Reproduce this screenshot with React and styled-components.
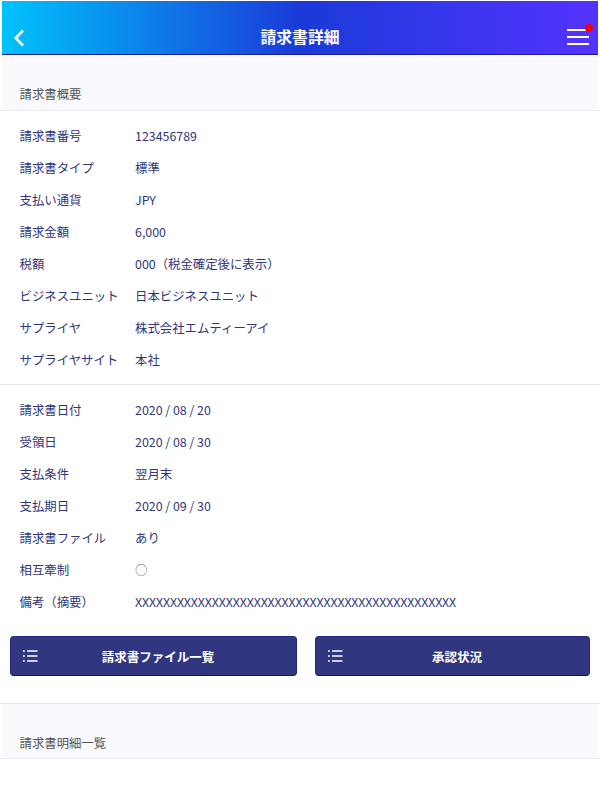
import React from "react";
import styled, { createGlobalStyle } from "styled-components";

const GlobalStyle = createGlobalStyle`
  html, body {
    margin: 0;
    padding: 0;
    background: #fff;
    font-family: "Noto Sans CJK JP", "Noto Sans", sans-serif;
  }
`;

const summaryRows = [
  ["請求書番号", "123456789"],
  ["請求書タイプ", "標準"],
  ["支払い通貨", "JPY"],
  ["請求金額", "6,000"],
  ["税額", "000（税金確定後に表示）"],
  ["ビジネスユニット", "日本ビジネスユニット"],
  ["サプライヤ", "株式会社エムティーアイ"],
  ["サプライヤサイト", "本社"],
];

const dateRows = [
  ["請求書日付", "2020 / 08 / 20"],
  ["受領日", "2020 / 08 / 30"],
  ["支払条件", "翌月末"],
  ["支払期日", "2020 / 09 / 30"],
  ["請求書ファイル", "あり"],
  ["相互牽制", "○"],
  ["備考（摘要）", "X".repeat(46)],
];

const ListIcon = () => (
  <svg width="15" height="12" viewBox="0 0 15 12" fill="none" stroke="#fff" strokeWidth="1.4">
    <path d="M0 1h1.8M0 6h1.8M0 11h1.8" />
    <path d="M4 1h10.5M4 6h10.5M4 11h10.5" />
  </svg>
);

const BackIcon = () => (
  <svg width="12" height="18" viewBox="0 0 12 18" fill="none" stroke="#fff" strokeWidth="2.6">
    <path d="M10 1.5 2.6 9l7.4 7.5" />
  </svg>
);

const App = () => (
  <Page>
    <GlobalStyle />
    <Header>
      <BackButton><BackIcon /></BackButton>
      <Title>請求書詳細</Title>
      <Menu>
        <MenuLine />
        <MenuLine />
        <MenuLine />
        <Dot />
      </Menu>
    </Header>
    <SectionHead>請求書概要</SectionHead>
    <RowGroup>
      {summaryRows.map(([label, value]) => (
        <Row key={label}>
          <Label>{label}</Label>
          <Value>{value}</Value>
        </Row>
      ))}
    </RowGroup>
    <RowGroup $top>
      {dateRows.map(([label, value]) => (
        <Row key={label}>
          <Label>{label}</Label>
          <Value $muted={value === "○"} $tight={value.length > 40}>{value}</Value>
        </Row>
      ))}
    </RowGroup>
    <Buttons>
      <ActionButton $width={287}>
        <ListIcon />
        <span>請求書ファイル一覧</span>
      </ActionButton>
      <ActionButton $width={275}>
        <ListIcon />
        <span>承認状況</span>
      </ActionButton>
    </Buttons>
    <SectionHead $spaced>請求書明細一覧</SectionHead>
  </Page>
);

export default App;

const Page = styled.div`
  width: 600px;
  height: 800px;
  overflow: hidden;
  background: #fff;
`;

const Header = styled.header`
  position: relative;
  box-sizing: border-box;
  height: 54px;
  margin: 1px 2px 0;
  display: flex;
  align-items: flex-end;
  justify-content: center;
  background: linear-gradient(90deg, #00c3fb 0%, #1a3ad8 50%, #5433ff 100%);
  border-bottom: 1px solid #1a1a9a;
`;

const BackButton = styled.div`
  position: absolute;
  left: 11px;
  bottom: 7px;
  display: flex;
`;

const Title = styled.h1`
  margin: 0 0 6px;
  color: #fff;
  font-size: 15.8px;
  line-height: 22px;
  font-weight: 700;
`;

const Menu = styled.div`
  position: absolute;
  right: 9px;
  top: 28px;
  width: 22px;
  display: flex;
  flex-direction: column;
  gap: 5px;
`;

const MenuLine = styled.span`
  display: block;
  height: 2px;
  background: #fff;
`;

const Dot = styled.span`
  position: absolute;
  right: -4px;
  top: -5px;
  width: 8px;
  height: 8px;
  border-radius: 50%;
  background: #f00010;
`;

const SectionHead = styled.div`
  box-sizing: border-box;
  height: 56px;
  padding: 0 19.5px ${(p) => (p.$spaced ? "6px" : "7px")};
  display: flex;
  align-items: flex-end;
  background: #f9f9fe;
  box-shadow: inset 2px 0 #fff, inset -2px 0 #fff;
  color: #555;
  font-size: 12.4px;
  line-height: 18px;
  border-bottom: 1px solid #e8e8ec;
  border-top: ${(p) => (p.$spaced ? "1px solid #e8e8ec" : "none")};
`;

const RowGroup = styled.div`
  padding: ${(p) => (p.$top ? "9px 0 0" : "9px 0 8px")};
  border-top: ${(p) => (p.$top ? "1px solid #e8e8ec" : "none")};
`;

const Row = styled.div`
  height: 32px;
  display: flex;
  align-items: center;
  padding-left: 19.5px;
  font-size: 12.4px;
  color: #2f3679;
`;

const Label = styled.div`
  width: 115.5px;
  white-space: nowrap;
`;

const Value = styled.div`
  white-space: nowrap;
  color: ${(p) => (p.$muted ? "#666" : "inherit")};
  letter-spacing: ${(p) => (p.$tight ? "-0.12px" : "normal")};
`;

const Buttons = styled.div`
  display: flex;
  justify-content: space-between;
  padding: 18px 10px 27px;
`;

const ActionButton = styled.div`
  position: relative;
  box-sizing: border-box;
  width: ${(p) => p.$width}px;
  height: 40px;
  padding-left: 9px;
  display: flex;
  align-items: center;
  justify-content: center;
  background: #303680;
  border: 1px solid #1f2a80;
  border-bottom-color: #10107a;
  border-radius: 4px;
  color: #fff;
  font-size: 12.5px;
  font-weight: 700;

  svg {
    position: absolute;
    left: 12px;
    top: 13px;
  }
`;
